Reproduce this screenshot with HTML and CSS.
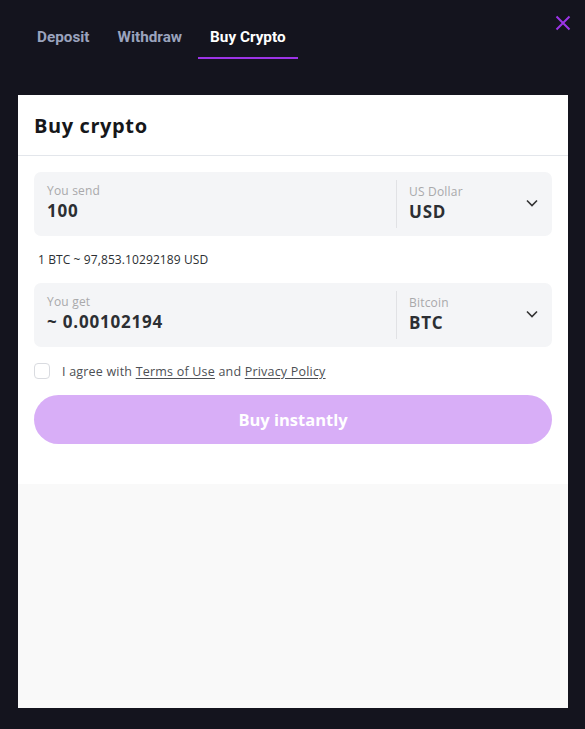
FILE: index.html
```html
<!DOCTYPE html>
<html>
<head>
<meta charset="utf-8">
<link rel="stylesheet" href="styles.css">
</head>
<body>
<div class="modal">
  <div class="topbar">
    <nav class="tabs">
      <div class="tab">Deposit</div>
      <div class="tab">Withdraw</div>
      <div class="tab active">Buy Crypto</div>
    </nav>
    <div class="close">
      <svg width="16" height="16" viewBox="0 0 16 16"><path d="M1.5 1.5 L14.5 14.5 M14.5 1.5 L1.5 14.5" stroke="#9c34e6" stroke-width="2" fill="none"/></svg>
    </div>
  </div>
  <div class="panel">
    <div class="widget">
      <div class="head">Buy crypto</div>
      <div class="body">
        <div class="field">
          <div class="amount">
            <div class="label">You send</div>
            <div class="value">100</div>
          </div>
          <div class="currency">
            <div class="cur-text">
              <div class="label">US Dollar</div>
              <div class="value">USD</div>
            </div>
            <svg class="chev" width="12" height="8" viewBox="0 0 12 8"><path d="M1 1.5 L6 6.5 L11 1.5" stroke="#333" stroke-width="1.6" fill="none"/></svg>
          </div>
        </div>
        <div class="rate">1 BTC ~ 97,853.10292189 USD</div>
        <div class="field">
          <div class="amount">
            <div class="label">You get</div>
            <div class="value">~ 0.00102194</div>
          </div>
          <div class="currency">
            <div class="cur-text">
              <div class="label">Bitcoin</div>
              <div class="value">BTC</div>
            </div>
            <svg class="chev" width="12" height="8" viewBox="0 0 12 8"><path d="M1 1.5 L6 6.5 L11 1.5" stroke="#333" stroke-width="1.6" fill="none"/></svg>
          </div>
        </div>
        <div class="agree">
          <span class="box"></span>
          <span class="agree-text">I agree with <u>Terms of Use</u> and <u>Privacy Policy</u></span>
        </div>
        <div class="btn">Buy instantly</div>
      </div>
    </div>
    <div class="filler"></div>
  </div>
</div>
</body>
</html>
```
FILE: styles.css
```css
html, body {
  margin: 0;
  padding: 0;
  background: #14141e;
  height: 100%;
}
.modal {
  display: flex;
  flex-direction: column;
  height: 729px;
  box-sizing: border-box;
  padding: 0 17px 21px 18px;
}
.topbar {
  display: flex;
  justify-content: space-between;
  align-items: flex-start;
}
.tabs {
  display: flex;
  gap: 4px;
  margin-top: 27px;
  margin-left: 7px;
}
.tab {
  font-family: Roboto, "Liberation Sans", sans-serif;
  font-weight: 700;
  font-size: 15.3px;
  line-height: 20px;
  color: #9aa3bd;
  padding: 0 12px 10px;
  border-bottom: 2px solid transparent;
}
.tab.active {
  color: #ffffff;
  border-bottom-color: #9c34e6;
}
.close {
  margin-top: 15px;
  margin-right: -3px;
  width: 16px;
  height: 16px;
}
.close svg { display: block; }
.panel {
  margin-top: 36px;
  flex: 1;
  display: flex;
  flex-direction: column;
  background: #f9f9f9;
}
.widget {
  background: #fff;
  font-family: "Open Sans", "DejaVu Sans", sans-serif;
  color: #262626;
}
.head {
  height: 61px;
  box-sizing: border-box;
  border-bottom: 1px solid #e3e6eb;
  padding: 0 16px;
  display: flex;
  align-items: center;
  font-size: 20px;
  font-weight: 700;
  color: #16171a;
  letter-spacing: 0.6px;
}
.body {
  padding: 16px 16px 40px;
}
.field {
  height: 64px;
  background: #f4f5f7;
  border-radius: 7px;
  display: flex;
}
.amount {
  flex: 1;
  padding: 11px 13px 0;
}
.currency {
  box-sizing: border-box;
  width: 156px;
  margin: 8px 0;
  border-left: 1px solid #e1e2e5;
  display: flex;
  align-items: center;
  justify-content: space-between;
  padding: 0 14px 0 12px;
}
.cur-text { margin-top: -4px; }
.label {
  font-size: 12px;
  line-height: 15px;
  color: #a9a9ab;
  letter-spacing: 0.2px;
}
.value {
  font-size: 17px;
  line-height: 19px;
  margin-top: 3px;
  font-weight: 700;
  color: #2c2f33;
  letter-spacing: 0.8px;
}
.chev { display: block; margin-top: -2px; }
.rate {
  font-size: 12px;
  line-height: 16px;
  color: #2c2f33;
  padding: 16px 4px 15px;
  letter-spacing: 0.1px;
}
.agree {
  display: flex;
  align-items: center;
  margin-top: 16px;
  height: 16px;
}
.box {
  width: 16px;
  height: 16px;
  box-sizing: border-box;
  border: 1px solid #d9dbe0;
  border-radius: 4px;
  background: #fff;
}
.agree-text {
  margin-left: 12px;
  font-size: 12.5px;
  color: #4d4f54;
  letter-spacing: 0.2px;
}
.agree-text u { text-underline-offset: 2px; }
.btn {
  margin-top: 16px;
  height: 49px;
  border-radius: 25px;
  background: #d8aef7;
  color: #fff;
  font-weight: 700;
  font-size: 16.5px;
  display: flex;
  align-items: center;
  justify-content: center;
}
.filler { flex: 1; }
```
